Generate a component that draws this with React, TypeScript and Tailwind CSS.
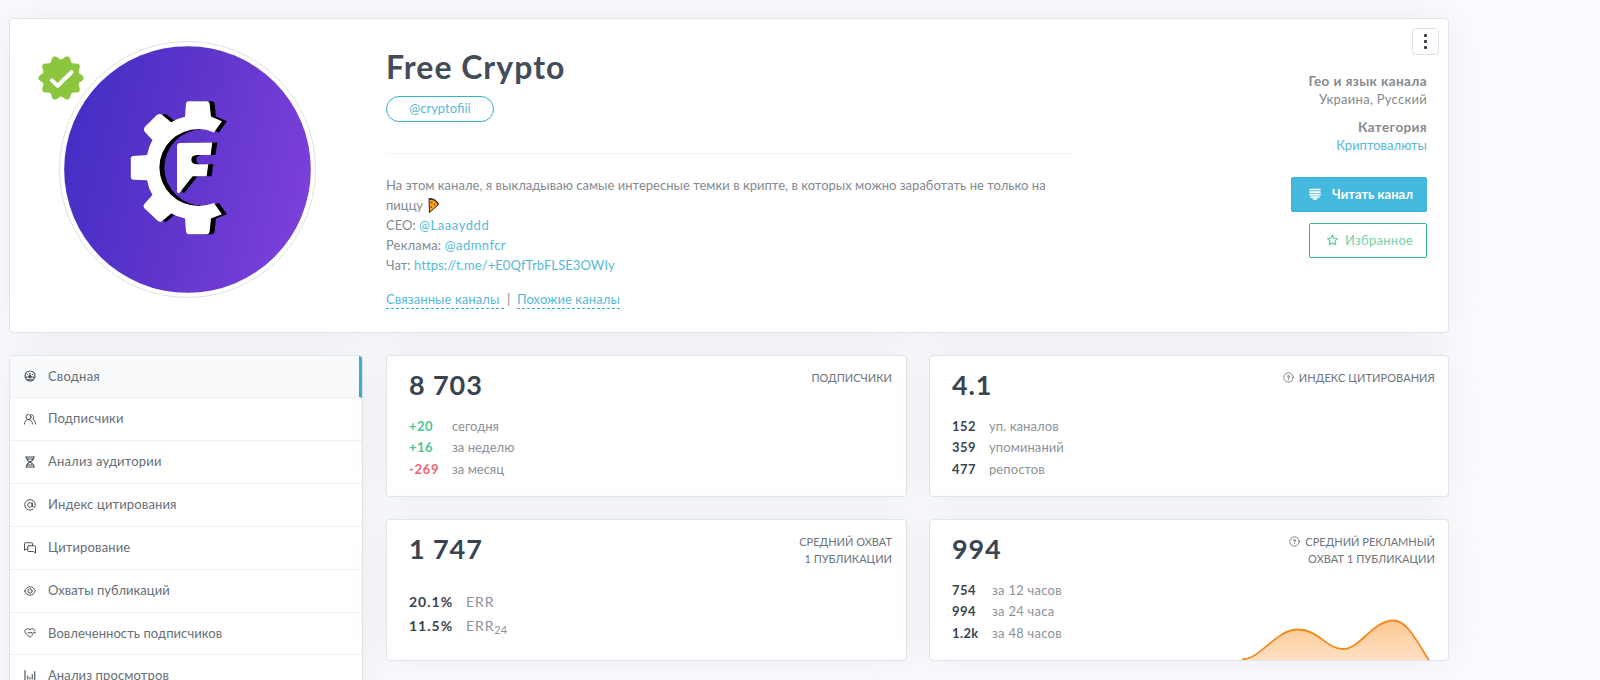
import type { ReactNode } from "react";

const CARD = "border border-[#e1e4e9] rounded-[4px] bg-white shadow-[0_0_35px_0_rgba(154,161,171,0.16)]";

const GEAR =
  "M566 304H620Q627 304 628 311L632 350L665 364L641 398Q618 388 595 388A118 115.500 0 0 0 595 619Q618 619 641 610L665 644L632 657L628 697Q627 704 620 704H566Q558 704 557 697L554 657Q532 652 512 642L485 665Q478 669 472 664L431 625Q427 618 433 612L456 586Q444 566 440 542L397 540Q391 539 391 533V476Q391 470 397 469L440 466Q444 442 456 421L432 395Q428 388 433 382L470 345Q477 340 484 344L512 367Q532 356 554 351L557 311Q558 304 566 304Z";
const LETTER =
  "M538 430L636 428L631 466H590Q573 467 573 480Q573 493 590 494H624L619 530H577L538 579Q531 584 530 575V438Q530 431 538 430Z";

const BADGE =
  "M" +
  Array.from({ length: 120 }, (_, i) => {
    const a = (i * Math.PI) / 60;
    const r = 61 + 6 * Math.cos(10 * a);
    return `${(68 + r * Math.cos(a)).toFixed(1)} ${(68 + r * Math.sin(a)).toFixed(1)}`;
  }).join("L") +
  "Z";

function Avatar() {
  return (
    <div className="relative ml-[49px] mt-[22px] h-[257px] w-[257px] shrink-0 rounded-full border border-[#dee2e6] p-[4px]">
      <svg viewBox="190 138 743 743" className="h-full w-full">
        <defs>
          <linearGradient id="av" x1="0" y1="0.3" x2="1" y2="0.55">
            <stop offset="0" stopColor="#432ec4" />
            <stop offset="0.5" stopColor="#5f35cb" />
            <stop offset="1" stopColor="#7a40da" />
          </linearGradient>
        </defs>
        <circle cx="561.5" cy="509.5" r="371" fill="url(#av)" />
        <g transform="translate(15 0)" fill="#000">
          <path d={GEAR} />
          <path d={LETTER} />
        </g>
        <path d={GEAR} fill="#fff" />
        <path d={LETTER} fill="#fff" />
      </svg>
      <svg viewBox="0 0 136 136" className="absolute -left-[22px] top-[13px] h-[46px] w-[46px]">
        <path d={BADGE} fill="#8cc63f" />
        <path d="M41 75L58 91L99 51" fill="none" stroke="#fff" strokeWidth="12" strokeLinecap="round" strokeLinejoin="round" />
      </svg>
    </div>
  );
}

function Icon({ children, w = 1.9 }: { children: ReactNode; w?: number }) {
  return (
    <svg viewBox="0 0 24 24" className="-mt-px h-[12px] w-[12px] shrink-0" fill="none" stroke="#414b57" strokeWidth={w} strokeLinecap="round" strokeLinejoin="round">
      {children}
    </svg>
  );
}

const MENU: { label: string; track: string; icon: ReactNode }[] = [
  {
    label: "Сводная",
    track: "tracking-[0.21px]",
    icon: (
      <Icon w={2.2}>
        <circle cx="12" cy="12" r="10" />
        <path d="M3 15C5.500 13.500 9 13.500 12 13.500s6.500 0 9 1.500M12 12V6.500" />
        <circle cx="12" cy="13.500" r="2.200" fill="#414b57" />
        <path d="M7 9v.1M17 9v.1M7 19.500h10" />
      </Icon>
    ),
  },
  {
    label: "Подписчики",
    track: "tracking-[0.17px]",
    icon: (
      <Icon>
        <circle cx="9" cy="8" r="5" />
        <path d="M1 22c0-5 3.500-9 8-9s8 4 8 9M14.500 3.200a5 5 0 0 1 3 8.800c3 1.600 5.500 5.500 5.500 10" />
      </Icon>
    ),
  },
  {
    label: "Анализ аудитории",
    track: "tracking-[0.19px]",
    icon: (
      <Icon w={2.1}>
        <path d="M3 2h17M4 22h17M5 2c0 5 3 8 7 10-4 2-7 5-7 10M20 1c0 5-4 9-8 11 4 2 8 5 8 10M7 6h10M8 18h8" />
      </Icon>
    ),
  },
  {
    label: "Индекс цитирования",
    track: "tracking-[0.14px]",
    icon: (
      <Icon>
        <circle cx="12" cy="12" r="4.600" />
        <path d="M16.600 7.500v6a3 3 0 0 0 6 0V12A10.600 10.600 0 1 0 18 20.600" />
      </Icon>
    ),
  },
  {
    label: "Цитирование",
    track: "tracking-[0.14px]",
    icon: (
      <Icon w={1.9}>
        <path d="M7 14H4l-3 3V3a1.500 1.500 0 0 1 1.500-1.500h13A1.500 1.500 0 0 1 17 3v4" />
        <path d="M9 7.500h12.500A1.500 1.500 0 0 1 23 9v13.500l-3.500-3.500H9a1.500 1.500 0 0 1-1.500-1.500V9A1.500 1.500 0 0 1 9 7.500z" />
      </Icon>
    ),
  },
  {
    label: "Охваты публикаций",
    track: "tracking-[0.03px]",
    icon: (
      <Icon>
        <path d="M1.500 12C4 6.500 7.500 3.500 12 3.500s8 3 10.500 8.500C20 17.500 16.500 20.500 12 20.500S4 17.500 1.500 12z" />
        <circle cx="12" cy="12" r="4.300" />
      </Icon>
    ),
  },
  {
    label: "Вовлеченность подписчиков",
    track: "tracking-[0.07px]",
    icon: (
      <Icon>
        <path d="M21.500 8c0-2.500-2-4.500-4.500-4.500-2 0-4 .5-5 2-1-1.500-2.500-2-4.500-2C4.500 3.500 2 5.500 2 8.500c0 4.500 5 8 10 12 2-1.600 4-3.200 5.800-5M8 11.500h4l2-1.500 2.500 3.500 1.500-2h5" />
      </Icon>
    ),
  },
  {
    label: "Анализ просмотров",
    track: "tracking-[0.12px]",
    icon: (
      <Icon w={2.2}>
        <path d="M2 1v21h20M7.500 12v6M12 15v3M16.500 9v9M21.500 3v19" />
      </Icon>
    ),
  },
];

function Help() {
  return (
    <svg viewBox="0 0 12 12" className="mr-[5px] mt-[3px] h-[11px] w-[11px] shrink-0" fill="none" stroke="#6c757d" strokeLinecap="round">
      <circle cx="6" cy="6" r="5.100" strokeWidth="0.950" />
      <path d="M4.900 4.700C5.200 3.700 7.300 3.900 7 5.200 6.900 5.900 6 6 6 6.600M6 8.100v.1" strokeWidth="1.100" />
    </svg>
  );
}

type Row = { value: string; label: ReactNode; color?: string; track?: string };

function StatCard({
  value,
  title,
  help,
  rows,
  cols,
  big,
  children,
}: {
  value: string;
  title: { text: string; track: string }[];
  help?: boolean;
  rows: Row[];
  cols: string;
  big?: boolean;
  children?: ReactNode;
}) {
  return (
    <section className={`relative h-[142px] overflow-hidden pl-[22px] pr-[14px] ${CARD}`}>
      <div className="flex h-[46px] justify-between">
        <div className="mt-[11px] text-[27px] font-bold leading-[35px] tracking-[0.900px] text-[#3a4450]">{value}</div>
        <div className="mt-[13px] flex text-right text-[11px] leading-[17px] text-[#6c757d]">
          {help && <Help />}
          <div className={help ? "-mr-px" : ""}>
            {title.map((t) => (
              <div key={t.text} className={t.track}>
                {t.text}
              </div>
            ))}
          </div>
        </div>
      </div>
      <div className={big ? "mt-[24px] text-[14px] leading-[24px]" : "mt-[14px] text-[13px] leading-[21.330px]"}>
        {rows.map((r) => (
          <div key={r.value} className={`grid ${cols}`}>
            <span className={`font-bold ${r.color ?? "text-[#3b4550]"} ${r.track ?? "tracking-[0.400px]"}`}>{r.value}</span>
            <span className="text-[#8b9299]">{r.label}</span>
          </div>
        ))}
      </div>
      {children}
    </section>
  );
}

function Pizza() {
  return (
    <svg viewBox="0 0 22 30" className="ml-[5px] inline-block h-[15px] w-[11px] align-[-3px]">
      <path d="M2 1C12 1 19 6 21 13L3 29Z" fill="#fba91f" stroke="#2b2020" strokeWidth="2" strokeLinejoin="round" />
      <path d="M2 2C11 2 18 6 20 13" fill="none" stroke="#4a2d1a" strokeWidth="2.500" />
      <circle cx="7" cy="9" r="1.900" fill="#c8321e" />
      <circle cx="13" cy="13" r="1.900" fill="#c8321e" />
      <circle cx="6.500" cy="18" r="1.900" fill="#c8321e" />
    </svg>
  );
}

export default function App() {
  return (
    <div className="h-[680px] w-[1600px] overflow-hidden bg-[#fafbfe] pl-[9px] pt-[18px] font-['Lato','Noto_Sans',sans-serif] text-[13px] text-[#838a91]">
      <header className={`flex h-[315px] w-[1440px] ${CARD}`}>
        <Avatar />
        <div className="ml-[70px] w-[687px]">
          <h1 className="mt-[28px] whitespace-nowrap text-[32px] font-bold leading-[40px] tracking-[1.000px] text-[#434c58]">Free Crypto</h1>
          <a className="mt-[9px] block h-[26px] w-[108px] rounded-full border border-[#39afd1] text-center leading-[23px] text-[#56b9d7]">@cryptofiii</a>
          <div className="ml-[2px] mt-[31px] h-px bg-[#f1f3f5]" />
          <p className="mt-[21px] w-[675px] leading-[20px] tracking-[0.020px]">
            На этом канале, я выкладываю самые интересные темки в крипте, в которых можно заработать не только на
            <br />
            пиццу
            <Pizza />
            <br />
            CEO: <a className="tracking-[0.560px] text-[#56b9d7]">@Laaayddd</a>
            <br />
            <span className="tracking-[0.160px]">Реклама: </span>
            <a className="tracking-[0.430px] text-[#56b9d7]">@admnfcr</a>
            <br />
            Чат: <a className="tracking-[0.090px] text-[#56b9d7]">https://t.me/+E0QfTrbFLSE3OWIy</a>
          </p>
          <div className="mt-[15px] flex leading-[18px] tracking-[0.090px]">
            <a className="w-[118px] border-b border-dashed border-[#39afd1] text-[#56b9d7]">Связанные каналы</a>
            <span className="w-[13px] pl-[3px]">|</span>
            <a className="border-b border-dashed border-[#39afd1] text-[#56b9d7]">Похожие каналы</a>
          </div>
        </div>
        <div className="ml-auto flex flex-col items-end pr-[9px] pt-[9px]">
          <button className="flex h-[27px] w-[27px] flex-col items-center justify-center gap-[3px] rounded-[4px] border border-[#dee2e6]">
            <i className="h-[3px] w-[3px] rounded-[1px] bg-[#313a46]" />
            <i className="h-[3px] w-[3px] rounded-[1px] bg-[#313a46]" />
            <i className="h-[3px] w-[3px] rounded-[1px] bg-[#313a46]" />
          </button>
          <div className="mr-[12px] mt-[17px] flex flex-col items-end leading-[18px]">
            <b className="text-[13.500px] tracking-[0.400px]">Гео и язык канала</b>
            <span className="tracking-[0.280px]">Украина, Русский</span>
            <b className="mt-[10px] text-[13.500px] tracking-[0.370px]">Категория</b>
            <a className="text-[#56b9d7]">Криптовалюты</a>
            <a className="mt-[23px] flex h-[35px] w-[136px] items-center rounded-[2px] border border-[#39b3d8] bg-[#44b9dd] pb-[2px] pl-[17px] font-bold text-white">
              <svg viewBox="0 0 12 12" className="mr-[11px] h-[12px] w-[12px]" stroke="#fff" strokeWidth="1.700" strokeLinecap="round">
                <path d="M1 1.500h10M1 4.100h10M1 6.700h10M2 9h8M4.500 10.800h3" />
              </svg>
              Читать канал
            </a>
            <a className="mt-[11px] flex h-[35px] w-[118px] items-center rounded-[2px] border border-[#35b393] pb-[2px] pl-[16px] tracking-[0.260px] text-[#76d2ab]">
              <svg viewBox="0 0 24 24" className="mr-[6px] h-[12px] w-[13px]" fill="none" stroke="#5cc79b" strokeWidth="2.200" strokeLinejoin="round">
                <path d="M12 2l3 6.500 7 .9-5.100 4.900 1.300 7L12 17.900 5.800 21.300l1.300-7L2 9.400l7-.9z" />
              </svg>
              Избранное
            </a>
          </div>
        </div>
      </header>

      <div className="mt-[22px] flex">
        <nav className={`h-[400px] w-[354px] shrink-0 overflow-hidden ${CARD}`}>
          {MENU.map((m, i) => (
            <a
              key={m.label}
              className={`flex items-center border-b border-b-[#eef1f3] pl-[14px] text-[#666e77] ${
                i === 0 ? "h-[42px] border-r-3 border-r-[#39afd1] bg-[#f9fafc]" : i === 6 ? "h-[42px]" : "h-[43px]"
              }`}
            >
              {m.icon}
              <span className={`-mt-[2px] ml-[12px] leading-[20px] ${m.track}`}>{m.label}</span>
            </a>
          ))}
        </nav>

        <main className="ml-[23px] grid w-[1063px] grid-cols-[521px_520px] content-start gap-x-[22px] gap-y-[22px]">
          <StatCard
            value="8 703"
            title={[{ text: "ПОДПИСЧИКИ", track: "tracking-normal" }]}
            cols="grid-cols-[43px_1fr]"
            rows={[
              { value: "+20", color: "text-[#4cc592]", label: "сегодня" },
              { value: "+16", color: "text-[#4cc592]", label: "за неделю" },
              { value: "-269", color: "text-[#ec6570]", track: "tracking-[0.700px]", label: "за месяц" },
            ]}
          />
          <StatCard
            value="4.1"
            help
            title={[{ text: "ИНДЕКС ЦИТИРОВАНИЯ", track: "tracking-[0.080px]" }]}
            cols="grid-cols-[37px_1fr]"
            rows={[
              { value: "152", label: <span className="tracking-[0.080px]">уп. каналов</span> },
              { value: "359", label: <span className="tracking-[0.080px]">упоминаний</span> },
              { value: "477", label: <span className="tracking-[0.080px]">репостов</span> },
            ]}
          />
          <StatCard
            value="1 747"
            title={[
              { text: "СРЕДНИЙ ОХВАТ", track: "tracking-normal" },
              { text: "1 ПУБЛИКАЦИИ", track: "tracking-normal" },
            ]}
            cols="grid-cols-[57px_1fr]"
            big
            rows={[
              { value: "20.1%", track: "tracking-[1.000px]", label: <span className="tracking-[0.900px]">ERR</span> },
              {
                value: "11.5%",
                track: "tracking-[1.000px]",
                label: (
                  <span className="tracking-[0.900px]">
                    ERR<sub className="bottom-[-3px] text-[11px] leading-none tracking-normal">24</sub>
                  </span>
                ),
              },
            ]}
          />
          <StatCard
            value="994"
            help
            title={[
              { text: "СРЕДНИЙ РЕКЛАМНЫЙ", track: "tracking-normal" },
              { text: "ОХВАТ 1 ПУБЛИКАЦИИ", track: "tracking-[0.040px]" },
            ]}
            cols="grid-cols-[40px_1fr]"
            rows={[
              { value: "754", label: <span className="tracking-[0.250px]">за 12 часов</span> },
              { value: "994", label: <span className="tracking-[0.250px]">за 24 часа</span> },
              { value: "1.2k", label: <span className="tracking-[0.250px]">за 48 часов</span> },
            ]}
          >
            <svg viewBox="0 0 190 44" className="absolute bottom-[-1px] right-[16px] h-[44px] w-[190px]">
              <defs>
                <linearGradient id="fl" x1="0" y1="0" x2="0" y2="1">
                  <stop offset="0" stopColor="#fdc793" />
                  <stop offset="1" stopColor="#fee1c4" />
                </linearGradient>
              </defs>
              <path d="M0 42.500C19 42 34 12.500 55.500 12.500S84 32 101 32 131 3.500 151.500 3.500C165 3.500 174 23 187 44H0Z" fill="url(#fl)" />
              <path d="M0 42.500C19 42 34 12.500 55.500 12.500S84 32 101 32 131 3.500 151.500 3.500C165 3.500 174 23 188 45" fill="none" stroke="#f08a1d" strokeWidth="1.800" />
            </svg>
          </StatCard>
        </main>
      </div>
    </div>
  );
}
